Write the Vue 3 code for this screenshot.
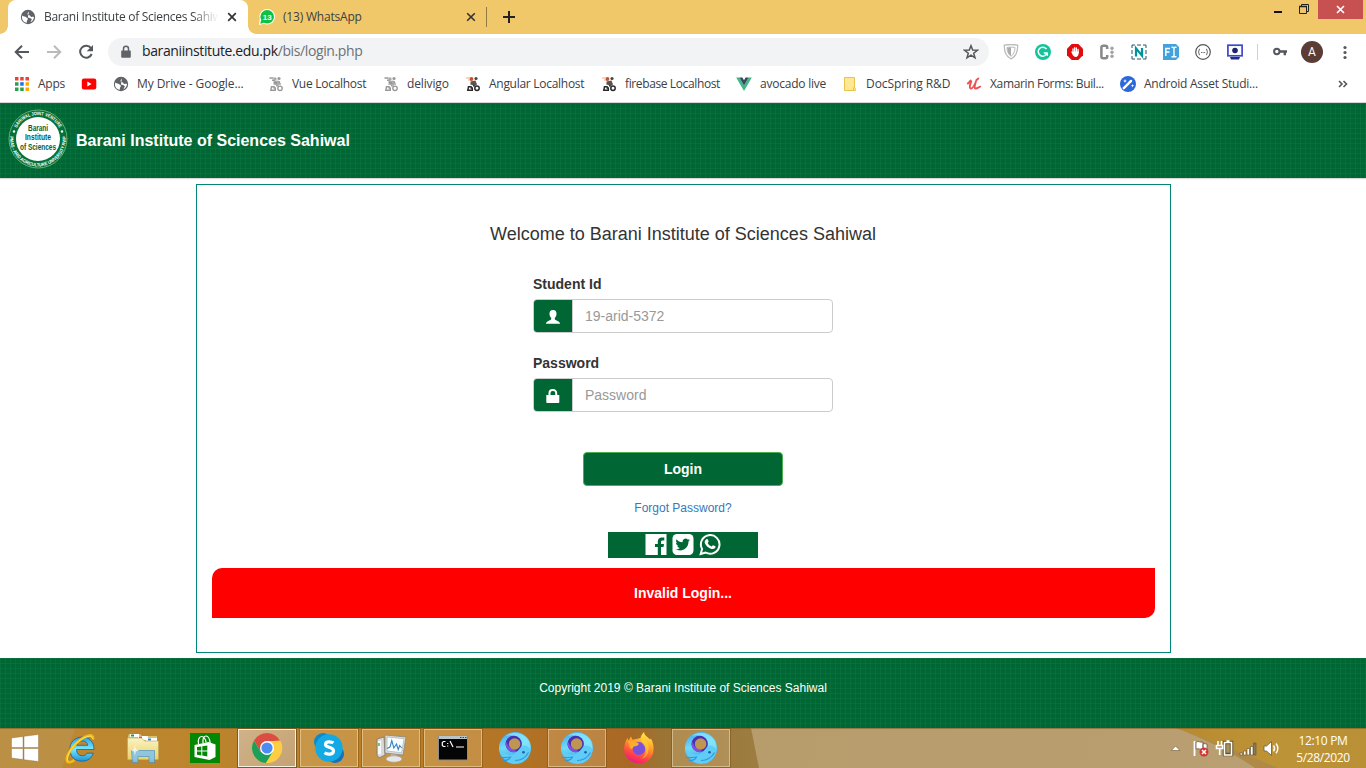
<script setup>
const bookmarks = [
  { icon: 'apps', label: 'Apps', w: 67, ls: -0.22 },
  { icon: 'youtube', label: '', w: 32, ls: 0 },
  { icon: 'globe', label: 'My Drive - Google...', w: 155, ls: -0.08 },
  { icon: 'rider', label: 'Vue Localhost', w: 115, ls: -0.28 },
  { icon: 'rider', label: 'delivigo', w: 82, ls: -0.15 },
  { icon: 'riderdark', label: 'Angular Localhost', w: 136, ls: -0.28 },
  { icon: 'riderdark', label: 'firebase Localhost', w: 135, ls: -0.38 },
  { icon: 'vue', label: 'avocado live', w: 106, ls: -0.22 },
  { icon: 'folder', label: 'DocSpring R&D', w: 124, ls: -0.08 },
  { icon: 'udemy', label: 'Xamarin Forms: Buil...', w: 154, ls: -0.36 },
  { icon: 'wand', label: 'Android Asset Studi...', w: 150, ls: -0.24 }
]
const extensions = ['shield', 'grammarly', 'hand', 'cdots', 'nbox', 'fi', 'braces', 'monitor']
const tasks = [
  { icon: 'ie' },
  { icon: 'explorer' },
  { icon: 'store' },
  { icon: 'chrome', state: 'active' },
  { icon: 'skype', state: 'open' },
  { icon: 'perf', state: 'open' },
  { icon: 'cmd', state: 'open' },
  { icon: 'whale' },
  { icon: 'whale', state: 'open' },
  { icon: 'firefox' },
  { icon: 'whale', state: 'open' }
]
</script>

<template>
  <div class="screen">
    <svg class="defs" width="0" height="0">
      <defs>
        <linearGradient id="gFox" x1="0.7" y1="0" x2="0.3" y2="1"><stop offset="0" stop-color="#fff04a" /><stop offset="0.4" stop-color="#ff9a26" /><stop offset="0.75" stop-color="#ff4048" /><stop offset="1" stop-color="#e2188a" /></linearGradient>
        <linearGradient id="gWhale" x1="0" y1="0" x2="0.3" y2="1"><stop offset="0" stop-color="#3fa2ee" /><stop offset="0.5" stop-color="#6fdcf8" /><stop offset="1" stop-color="#3b9ae8" /></linearGradient>
        <linearGradient id="gIe" x1="0" y1="0" x2="0" y2="1"><stop offset="0" stop-color="#2b9fdc" /><stop offset="0.5" stop-color="#7be6fd" /><stop offset="1" stop-color="#1c93d6" /></linearGradient>
        <linearGradient id="gFold" x1="0" y1="0" x2="0" y2="1"><stop offset="0" stop-color="#fbf3c0" /><stop offset="1" stop-color="#ecd06c" /></linearGradient>
        <path id="ringTopArc" d="M6 30 A24 24 0 0 1 54 30" />
        <path id="ringBottomArc" d="M3.300 21 A28 28 0 1 0 56.700 21" />
      </defs>
      <symbol id="i-globe" viewBox="0 0 16 16"><circle cx="8" cy="8" r="7.200" fill="#5f6368" /><path d="M2.300 6.400c1.600 1.300 3 .6 3.700 1.700.5 1 1.900.7 1.900 2 0 .9-1 1-1 2v1.700C4 13.500 2 11.500 1.900 8.200zM9 2.200C8.600 3.500 7.600 3.400 7.500 4.700c-.1 1.200 1.200 1 2 1.500.9.5 1 1.600 2 1.700 1 .1 1.500-.4 2.500.1-.2 2.500-1.600 4.400-3.600 5.300.8-1 .6-1.900 1.600-2.700-1.300-1.900-2.700-2-4.100-2.200" fill="#fff" /></symbol>
      <symbol id="i-apps" viewBox="0 0 16 16"><path d="M1 1h3.500v3.500H1zM6.200 1h3.500v3.500H6.200zM11.500 1H15v3.500h-3.500z" fill="#ea4335" /><path d="M1 6.200h3.500v3.500H1zM1 11.500h3.500V15H1zM6.200 11.500h3.500V15H6.200z" fill="#2e9e4f" /><path d="M6.200 6.200h3.500v3.500H6.200z" fill="#1a73e8" /><path d="M11.500 6.200H15v3.500h-3.500zM11.500 11.500H15V15h-3.500z" fill="#f9ab00" /></symbol>
      <symbol id="i-youtube" viewBox="0 0 16 16"><rect x=".8" y="2.500" width="14.500" height="11" rx="2.200" fill="#f00" /><path d="M6.300 5.500v5l4.300-2.500z" fill="#fff" /></symbol>
      <symbol id="i-rider" viewBox="0 0 16 16"><g fill="none" stroke="#999" stroke-width="1.400"><path d="M6.800 10.800H3.500l-.7 3.500h4.500V12H5.500M7.500 7.500l2 3" /><circle cx="12" cy="12.300" r="2.200" /><path d="M1.500 2h4M4 4.200h3" /></g><circle cx="7" cy="3" r="1.700" fill="#aaa" /><circle cx="11" cy="2.500" r="1.600" fill="#999" /><path d="M5.500 5l5-.5 1.500 4-2 1.500-2-1.500-2.500.5z" fill="#aaa" /><path d="M11 5l1.500 3.500M6 6.500l3 .5" stroke="#888" /></symbol>
      <symbol id="i-riderdark" viewBox="0 0 16 16"><g fill="none" stroke="#292929" stroke-width="1.500"><path d="M6.800 10.800H3.500l-.7 3.500h4.500V12H5.500M7.500 7.500l2 3" /><circle cx="12" cy="12.300" r="2.200" /></g><path d="M1 2h4M3 4h3" stroke="#e8aa90" stroke-width="1.200" /><circle cx="6.500" cy="3" r="1.900" fill="#c95126" /><circle cx="11" cy="2.500" r="1.600" fill="#444" /><path d="M5.500 5.500l5-1 1.500 4-2 1.500-2-1.500-2.500.5z" fill="#555" /></symbol>
      <symbol id="i-vue" viewBox="0 0 16 16"><path d="M.2 1.500h3.200L8 9.400l4.600-7.900h3.200L8 15z" fill="#41b883" /><path d="M3.400 1.500h3L8 4.300l1.600-2.800h3L8 9.400z" fill="#35495e" /></symbol>
      <symbol id="i-folder" viewBox="0 0 16 16"><path d="M2.500 1.500h10v10.200l.8.600v2.200h-10.800z" fill="#ffe793" stroke="#e8c54a" /><path d="M11.500 14.500v-3l1-1" fill="none" stroke="#e8c54a" /></symbol>
      <symbol id="i-udemy" viewBox="0 0 16 16"><path d="M1.800 7.500C3 7 3.800 5.600 4.500 4.500M5.300 5.300C4 8.500 3 12 4.600 12.500c2.200.6 4-3.500 5.400-7M10 5.300c-1.300 3.300-2 7-.4 7.200 1.500.2 2.500-1 4.600-1.800M10.300 4.300l2-1.800" fill="none" stroke="#ec5252" stroke-width="1.900" stroke-linecap="round" /></symbol>
      <symbol id="i-wand" viewBox="0 0 16 16"><circle cx="8" cy="8" r="8" fill="#2b68d9" /><path d="M3.800 12.200l4.500-4.500" stroke="#fff" stroke-width="2.500" stroke-linecap="round" /><path d="M9.300 6.700l1.700-1.700" stroke="#fff" stroke-width="2.500" stroke-linecap="round" /><path d="M5 3l.6 1.500L7 5l-1.400.6L5 7l-.6-1.400L3 5l1.400-.5zM12.500 8l.5 1.200 1.200.5-1.200.5-.5 1.200-.5-1.200-1.200-.5 1.200-.5z" fill="#fff" /></symbol>

      <symbol id="i-shield" viewBox="0 0 16 16"><path d="M1.300 1.200C5 .4 11 .4 14.700 1.200 14.900 8 12 13 8 15 4 13 1.100 8 1.300 1.200z" fill="#fff" stroke="#bbb" stroke-width="1.300" /><path d="M4 3.500c2.500-.5 5.500-.5 8 0 0 4.200-1.700 7.300-4 8.800-2.300-1.500-4-4.600-4-8.800z" fill="none" stroke="#bbb" /><path d="M8 3.200v9c-2.200-1.500-3.500-4.400-3.700-8.500z" fill="#aaa" /></symbol>
      <symbol id="i-grammarly" viewBox="0 0 16 16"><circle cx="8" cy="8" r="8" fill="#15c39a" /><path d="M11.500 5.200A4.500 4.500 0 1 0 12 9H8.800M12.300 9v2.700" fill="none" stroke="#fff" stroke-width="1.500" /></symbol>
      <symbol id="i-hand" viewBox="0 0 16 16"><path d="M4.700 0h6.600L16 4.700v6.600L11.300 16H4.700L0 11.300V4.700z" fill="#e30b0b" /><path d="M6 8.500V5M7.700 8V3.700M9.400 8V4M11.100 8.500V5.500" stroke="#fff" stroke-width="1.300" stroke-linecap="round" /><path d="M5.400 7.500h6.350c.2 3-.8 5.500-3.200 5.500-2 0-2.800-1.800-3.800-3.900l-.6-1.300c.5-.5 1-.3 1.300.3z" fill="#fff" /></symbol>
      <symbol id="i-cdots" viewBox="0 0 16 16"><path d="M8.200 5V3.500a1.800 1.800 0 0 0-1.800-1.800H4.200a1.800 1.800 0 0 0-1.800 1.800v9a1.800 1.800 0 0 0 1.800 1.800h2.200a1.800 1.800 0 0 0 1.800-1.800V11" fill="none" stroke="#888" stroke-width="2.500" /><circle cx="13" cy="4.300" r="1.700" fill="#a2a2a2" /><circle cx="13" cy="8.300" r="1.700" fill="#a2a2a2" /><circle cx="13" cy="12.300" r="1.700" fill="#a2a2a2" /></symbol>
      <symbol id="i-nbox" viewBox="0 0 16 16"><path d="M1 4V1h3M6 1h4M12 1h3v3M15 6v4M15 12v3h-3M10 15H6M4 15H1v-3M1 10V6" fill="none" stroke="#24566a" stroke-width="1" /><path d="M5 12.500V4.300l6 7.400V4" fill="none" stroke="#00939c" stroke-width="2.200" /></symbol>
      <symbol id="i-fi" viewBox="0 0 16 16"><path d="M0 0h13l3 3v10l-3 3H0z" fill="#42a2de" /><path d="M2.800 12V4.500H7M3 8h3.500M8.500 3.300h1.200q1.300 0 1.300 1.200v7q0 1.200-1.300 1.200H8.500M13.500 3.300h-1.200Q11 3.300 11 4.500M13.500 12.700h-1.200Q11 12.700 11 11.500" fill="none" stroke="#fff" stroke-width="1.400" /></symbol>
      <symbol id="i-braces" viewBox="0 0 16 16"><circle cx="8" cy="8" r="7.300" fill="#fff" stroke="#555" stroke-width="1.200" /><path d="M5 5c-1.500 0-.5 2.500-1.800 3C4.500 8.500 3.500 11 5 11M11 5c1.500 0 .5 2.500 1.800 3-1.300.5-.3 3-1.800 3M6 8.500h.9M7.600 8.500h.9M9.200 8.500h.9" fill="none" stroke="#555" stroke-width="1" /></symbol>
      <symbol id="i-monitor" viewBox="0 0 16 16"><rect x=".9" y="1.200" width="14.200" height="10.600" fill="#fff" stroke="#3b48cf" stroke-width="1.700" /><circle cx="8" cy="6.500" r="2.800" fill="#1c2470" /><path d="M3 13h10l-1 2.500H4z" fill="#222c80" /></symbol>

      <symbol id="i-ie" viewBox="0 0 34 34"><path d="M30 18.500H12.500c.1 4 2.400 6.200 5.700 6.200 2.300 0 3.900-.8 4.800-2.500h6.300c-1.600 5-5.700 8-11.200 8C10.500 30.200 6 25.500 6 18.300 6 11 11 6 18.100 6 25.500 6 30 11 30 18.500zm-17.300-4.200h11c-.3-2.800-2.300-4.400-5.300-4.400-3.100 0-5.200 1.700-5.700 4.400z" fill="url(#gIe)" stroke="#16639c" stroke-width=".8" /><path d="M29 8.500c1.200-7.500-9-3.600-16 3C4.500 19.500.5 29 4 31c1.700.9 4.300-.5 6.500-1.900" fill="none" stroke="#f3bb16" stroke-width="2.600" /><path d="M28.500 7.500C28 2.500 18 6.500 12 12.500 5.500 19 2 27 4 30" fill="none" stroke="#ffe767" stroke-width=".9" /></symbol>
      <symbol id="i-explorer" viewBox="0 0 34 34"><path d="M2 5l1-2h11l2 2h15v24H2z" fill="#d9c06d" /><path d="M4 3h9v3H4z" fill="#fff" /><path d="M5 3.500h3v2H5z" fill="#15a32a" /><path d="M12 5h10v4H12z" fill="#fff" /><path d="M13 5.500h3v2h-3z" fill="#df4a26" /><path d="M20 7h11v4H20z" fill="#fff" /><path d="M22 7.500h3v2h-3z" fill="#2b8cdc" /><path d="M1.500 7h14l3 3h14v18.500h-31z" fill="url(#gFold)" stroke="#bea250" stroke-width=".6" /><path d="M5.500 19.500h23v12H23v-6H12v6H6.500z" fill="#83c4e8" stroke="#3f8fc0" stroke-width=".7" opacity=".9" /><path d="M9 14l.7 4.300 3.300 1.200-3.300 1L9 25l-.9-4.500-3.100-1 3.100-1.200z" fill="#fff" opacity=".8" /></symbol>
      <symbol id="i-store" viewBox="0 0 34 34"><path d="M2 2h30v30H2z" fill="#028802" /><path d="M6.500 14l14-3 7 2.500V26l-6 3-15-3z" fill="#fff" /><path d="M10.500 13c-.8-4.200.5-7.500 3-7.500s4 2.500 4.600 6M15 12c-.4-4.500.8-7 3.200-7 2 0 3.300 2 4 7" fill="none" stroke="#fff" stroke-width="1.200" /><path d="M9 16l4.300-.6v4H9zM14.300 15.200l5-.8v5h-5zM9 20.400h4.300v4L9 23.700zM14.300 20.400h5v5l-5-.9z" fill="#028802" /></symbol>
      <symbol id="i-chrome" viewBox="0 0 34 34"><circle cx="17" cy="17" r="15" fill="#ffcd41" /><path d="M4 9.500A15 15 0 0 1 30 9.500L17 10.500l-6.500 10z" fill="#dc4d41" /><path d="M4 9.500A15 15 0 0 0 16 32L23.500 20.500l-13 0z" fill="#1b9f5a" /><path d="M17 10h13.400A15 15 0 0 1 16 32l7-11.500z" fill="#ffcd41" /><circle cx="17" cy="17" r="7" fill="#fff" /><circle cx="17" cy="17" r="5.600" fill="#4b8bf4" /></symbol>
      <symbol id="i-skype" viewBox="0 0 34 34"><circle cx="11" cy="11" r="9" fill="#0d89c8" /><circle cx="23" cy="23" r="9" fill="#1372ba" /><circle cx="17" cy="17" r="13.700" fill="#12a9e4" /><path d="M21.300 12c-1.600-1.500-7.500-2-7.800 1.300-.3 3.700 8 2.200 8 6.500 0 4.200-6.300 4-9 2" fill="none" stroke="#fff" stroke-width="3.200" /></symbol>
      <symbol id="i-perf" viewBox="0 0 34 34"><path d="M3 8l7-2 1 18-6 3-2-3z" fill="#d8d8d8" stroke="#777" stroke-width=".8" /><path d="M4 10l3-.6v14L4 23z" fill="#f7f7f7" /><path d="M4.200 12h1.500v3H4.200z" fill="#3ebc34" /><path d="M11 4l21 2-3 18-18-2z" fill="#ddd" stroke="#888" stroke-width=".8" /><path d="M13 6l17 1.700-2.400 14L13 20z" fill="#fafdff" stroke="#9aa" stroke-width=".6" /><path d="M13 17.500l3-1.500 1.800-6.500 2 7.500 2.700-4 1.700 5.500 1.500-4 2 2.500" fill="none" stroke="#3584c5" stroke-width="1.100" /><path d="M17 23l6 1 1 4h-8z" fill="#bbb" /><ellipse cx="20" cy="28" rx="8" ry="3.200" fill="#e6e6e6" stroke="#999" stroke-width=".6" /></symbol>
      <symbol id="i-cmd" viewBox="0 0 34 34"><path d="M2.500 5h29v24h-29z" fill="#050505" stroke="#8c8c8c" /><path d="M3 5h28v3H3z" fill="#b9c4c9" /><path d="M24 6h1.500v1H24zM26.500 6H28v1h-1.500zM29 6h1.500v1H29z" fill="#445" /><path d="M9.500 10.500h-2l-1.200 1v3l1.200 1h2M11.700 12v1M11.700 14.500v1M14 10l3 6" fill="none" stroke="#fff" stroke-width="1.200" /><path d="M20 16h8" stroke="#fff" /></symbol>
      <symbol id="i-whale" viewBox="0 0 34 34"><circle cx="17" cy="17" r="16" fill="url(#gWhale)" /><path d="M8 5C15-1 26 1.500 30.500 10c2 4 2.500 7 1.500 10-3-5-7-5-9-3 1.500-4 1-8-3-10.500C16 4 12 3.500 8 5z" fill="#86e6fd" opacity=".8" /><circle cx="15.700" cy="13" r="8.200" fill="#4630b4" /><path d="M8 10.500A8.200 8.200 0 0 0 19 20.500L11 16z" fill="#8050dc" /><circle cx="16.600" cy="13" r="5.800" fill="#bf9552" /><path d="M2 17c3 6.500 12 9 17 4 2.800-2.900 4-6.500 7-6.500s5 2 6.800 3.700C32 26.500 26 33 17 33 9 33 2.500 26.500 2 17z" fill="#5fcdf5" /><path d="M2 26c3.500 1.500 7 .5 10.500 0-1 2.600-4.500 4-8 3M17 29.500c6 0 11-3.500 13.500-8" fill="none" stroke="#2f98e2" stroke-width="1.200" /><circle cx="25.500" cy="21.300" r="1.300" fill="#1d5fa4" /></symbol>
      <symbol id="i-firefox" viewBox="0 0 34 34"><path d="M18.500 7C19 4 20.500 2.500 22 1c.5 4 3.500 4.500 6 7.500l1-1c5.500 10 2.500 24-11 25C7 32.500.5 24 2.500 14.500 3 11 4 9 5.500 7l1 2.500L9 5.500l1.500 3.300c3-.8 5-.8 8-1.800z" fill="url(#gFox)" /><circle cx="17" cy="17.500" r="6.500" fill="#7950dc" /><path d="M6 10c4-1.500 7 .2 9 1.700l2 .8c-.7 2.600-3 2.500-5 3-1.500.6-.7 3.700-4 1.800" fill="#ffab2c" /><path d="M19 5c5 2 10 9 6.500 18-1.500 3-4 4.500-7 4.800 6-2.300 7-9.300 2-15.300-1.500-2-2-5-1.500-7.500z" fill="#ffd53d" opacity=".55" /></symbol>
    </svg>

    <header class="chrome">
      <div class="tabbar">
        <div class="tab active">
          <svg class="fav" width="16" height="16"><use href="#i-globe" /></svg>
          <span class="tab-title fade">Barani Institute of Sciences Sahiwal</span>
          <svg class="x" width="10" height="10" viewBox="0 0 10 10"><path d="M1.200 1.200l7.600 7.600M8.800 1.200L1.200 8.800" stroke="#333" stroke-width="1.700" /></svg>
        </div>
        <div class="tab second">
          <svg class="fav" width="16" height="16" viewBox="0 0 16 16"><circle cx="8.200" cy="7.800" r="7.800" fill="#fff" /><path d="M0 16l.8-6 5 4.500z" fill="#fff" /><circle cx="8.200" cy="7.800" r="6.800" fill="#0dc143" /><path d="M1.300 14.700l.9-4 3 3z" fill="#0dc143" /><text x="8.200" y="10.500" text-anchor="middle" class="badge13">13</text></svg>
          <span class="tab-title wa">(13) WhatsApp</span>
          <svg class="x" width="10" height="10" viewBox="0 0 10 10"><path d="M1.200 1.200l7.600 7.600M8.800 1.200L1.200 8.800" stroke="#333" stroke-width="1.600" /></svg>
        </div>
        <svg class="plus" width="14" height="14" viewBox="0 0 14 14"><path d="M7 1v12M1 7h12" stroke="#222" stroke-width="2" /></svg>
        <div class="winctl">
          <svg width="50" height="20" viewBox="0 0 50 20"><path d="M6 12h8" stroke="#111" stroke-width="2" /><path d="M31.500 6.500h7v7h-7zM33.500 6V4.500h7v7H39" fill="none" stroke="#222" /><path d="M31 6.500h8" stroke="#222" stroke-width="1.500" /></svg>
          <div class="close"><svg width="9" height="9" viewBox="0 0 9 9"><path d="M1 1l7 7M8 1L1 8" stroke="#fff" stroke-width="1.600" /></svg></div>
        </div>
      </div>

      <div class="toolbar">
        <svg class="nav" width="96" height="20" viewBox="0 0 96 20">
          <path d="M23 10H10.500M16 3.700L9.700 10l6.300 6.300" fill="none" stroke="#54585c" stroke-width="2" />
          <path d="M41 10h12.500M48 3.700l6.300 6.300-6.300 6.300" fill="none" stroke="#b9bbbd" stroke-width="2" />
          <path d="M85 6.200A6 6 0 1 0 85.700 12" fill="none" stroke="#54585c" stroke-width="2" /><path d="M87 3v6.300h-6.300z" fill="#54585c" />
        </svg>
        <div class="omni">
          <svg width="10" height="14" viewBox="0 0 10 14"><path d="M1 5.500h8a.8.800 0 0 1 .8.800v5.400a1 1 0 0 1-1 1H1.200a1 1 0 0 1-1-1V6.300A.8.800 0 0 1 1 5.500z" fill="#5f6368" /><path d="M2.500 6V3.700a2.500 2.500 0 0 1 5 0V6" fill="none" stroke="#5f6368" stroke-width="1.500" /></svg>
          <span class="url">baraniinstitute.edu.pk<i>/bis/login.php</i></span>
          <svg class="star" width="16" height="16" viewBox="0 0 16 16"><path d="M8 1.700l1.700 4.400 4.700.2-3.700 2.900 1.300 4.600L8 11.200l-4 2.600 1.300-4.600L1.600 6.300l4.700-.2z" fill="none" stroke="#54585c" stroke-width="1.500" /></svg>
        </div>
        <div class="exts">
          <svg v-for="e in extensions" :key="e" width="16" height="16"><use :href="'#i-' + e" /></svg>
        </div>
        <span class="vsep"></span>
        <svg class="key" width="14" height="10" viewBox="0 0 14 10"><circle cx="3.800" cy="4.500" r="2.700" fill="none" stroke="#54585c" stroke-width="2" /><path d="M6.500 4.500H14M11.800 4.500v3.700" stroke="#54585c" stroke-width="2.400" /></svg>
        <span class="avatar">A</span>
        <svg class="dots" width="4" height="16" viewBox="0 0 4 16"><circle cx="2" cy="3.500" r="1.600" fill="#54585c" /><circle cx="2" cy="8.500" r="1.600" fill="#54585c" /><circle cx="2" cy="13.500" r="1.600" fill="#54585c" /></svg>
      </div>

      <nav class="bookmarks">
        <div v-for="(b, i) in bookmarks" :key="i" class="bm" :style="{ width: b.w + 'px', letterSpacing: b.ls + 'px' }">
          <svg width="16" height="16"><use :href="'#i-' + b.icon" /></svg>
          <span>{{ b.label }}</span>
        </div>
        <svg class="more" width="10" height="8" viewBox="0 0 10 8"><path d="M1 1l3 3-3 3M5.500 1l3 3-3 3" fill="none" stroke="#54585c" stroke-width="1.600" /></svg>
      </nav>
    </header>

    <section class="banner pattern">
      <svg class="logo" width="60" height="60" viewBox="0 0 60 60">
        <circle cx="30" cy="30" r="29" fill="#04733a" stroke="#65ac74" stroke-width="1" />
        <circle cx="30" cy="30" r="22" fill="#fff" />
        <text class="ring"><textPath href="#ringTopArc" startOffset="50%" text-anchor="middle" textLength="52" lengthAdjust="spacingAndGlyphs">SAHIWAL JOINT VENTURE</textPath></text>
        <text class="ring"><textPath href="#ringBottomArc" startOffset="50%" text-anchor="middle" textLength="92" lengthAdjust="spacingAndGlyphs">PMAS - ARID AGRICULTURE UNIVERSITY RWP</textPath></text>
        <circle cx="6" cy="22.500" r="1.200" fill="#fff" /><circle cx="54" cy="22.500" r="1.200" fill="#fff" />
        <text class="lg" x="30" y="21.800" textLength="20" lengthAdjust="spacingAndGlyphs" text-anchor="middle">Barani</text>
        <text class="lg" x="30" y="31.300" textLength="26" lengthAdjust="spacingAndGlyphs" text-anchor="middle">Institute</text>
        <text class="lg" x="30" y="40.800" textLength="36" lengthAdjust="spacingAndGlyphs" text-anchor="middle">of Sciences</text>
      </svg>
      <span class="brand">Barani Institute of Sciences Sahiwal</span>
    </section>

    <main class="panel">
      <h4>Welcome to Barani Institute of Sciences Sahiwal</h4>
      <div class="form">
        <label>Student Id</label>
        <div class="group">
          <span class="addon"><svg width="14" height="14" viewBox="0 0 14 14"><path d="M7 0c2.500 0 3.700 1.600 3.500 4.200-.1 1.600-.7 2.800-1.700 3.600v1.400c0 1 4.500 1.600 5.200 4.100v.4H0v-.4c.7-2.500 5.200-3.100 5.200-4.100V7.800c-1-.8-1.600-2-1.700-3.600C3.300 1.600 4.500 0 7 0z" fill="#fff" /></svg></span>
          <span class="field">19-arid-5372</span>
        </div>
        <label>Password</label>
        <div class="group">
          <span class="addon"><svg width="14" height="14" viewBox="0 0 14 14"><path d="M.3 6h13v7.200a.8.800 0 0 1-.8.800H1.100a.8.800 0 0 1-.8-.8z" fill="#fff" /><path d="M3.500 6.500V4a3 3 0 0 1 3-3h.7a3 3 0 0 1 3 3v2.500" fill="none" stroke="#fff" stroke-width="2" /></svg></span>
          <span class="field">Password</span>
        </div>
      </div>
      <div class="login">Login</div>
      <a class="forgot">Forgot Password?</a>
      <div class="social">
        <svg width="22" height="22" viewBox="0 0 22 22"><path d="M.5 0h21v21H16V13h2.500l.5-3h-3V8c0-1 .4-1.600 1.700-1.600h1.600V3.600c-.6-.1-1.300-.2-2.300-.2-2.700 0-4.200 1.500-4.200 4.200V10H10v3h2.800v8H.5z" fill="#fff" /></svg>
        <svg width="22" height="22" viewBox="0 0 22 22"><rect x=".5" width="21" height="21" rx="4.500" fill="#fff" /><path d="M18 6c-.5.300-1.100.4-1.700.5.600-.4 1-1 1.300-1.600-.6.300-1.200.6-1.900.7a3 3 0 0 0-5.100 2.700C8.100 8.200 5.900 7 4.500 5.200c-.9 1.500-.4 3.100.9 4-.5 0-1-.2-1.400-.4 0 1.500 1 2.700 2.400 3-.4.100-.9.100-1.300 0 .4 1.200 1.500 2 2.800 2.100-1.300 1-2.800 1.400-4.400 1.200 5.700 3.500 13-.1 13-7.500.6-.4 1.100-1 1.500-1.600z" fill="#006633" /></svg>
        <svg width="22" height="22" viewBox="0 0 22 22"><path d="M1.700 20l1.400-5A9.300 9.300 0 1 1 6.600 18.500z" fill="none" stroke="#fff" stroke-width="2" /><path d="M7.300 5.200c.6-.5 1.300-.3 1.500.2l.8 1.900c.2.600-.6 1.100-.9 1.600 1 1.800 2.100 2.700 3.900 3.500.5-.4 1-1.400 1.500-1.200l2.200 1c.5.300.2 1.500-.4 2.100-1.200 1.100-3 .9-4.600.2-2.500-1-4.300-3-5.300-5-.7-1.500-.3-3.300 1.300-4.300z" fill="#fff" /></svg>
      </div>
      <div class="alert">Invalid Login...</div>
    </main>

    <footer class="foot pattern">Copyright 2019 © Barani Institute of Sciences Sahiwal</footer>

    <div class="taskbar">
      <svg class="wall" width="1366" height="40" preserveAspectRatio="none" viewBox="0 0 1366 40">
        <defs>
          <linearGradient id="w1"><stop offset="0" stop-color="#bd8a32" /><stop offset="0.55" stop-color="#b97d27" /><stop offset="0.83" stop-color="#a96824" /><stop offset="0.87" stop-color="#9b7434" /><stop offset="1" stop-color="#9d7d41" /></linearGradient>
          <linearGradient id="w2"><stop offset="0" stop-color="#b79d6c" /><stop offset="1" stop-color="#b99f71" /></linearGradient>
          <linearGradient id="w3"><stop offset="0" stop-color="#b88a2f" /><stop offset="0.500" stop-color="#bd9336" /><stop offset="1" stop-color="#ba9036" /></linearGradient>
        </defs>
        <rect width="760" height="40" fill="url(#w1)" />
        <path d="M0 0H75L62 40H0z" fill="#bb9045" />
        <path d="M751 0H1190L1290 40H759z" fill="url(#w2)" />
        <path d="M1176 0H1366V40H1278Q1235 21 1176 0z" fill="url(#w3)" />
        <path d="M1176 0Q1235 21 1278 40H1255Q1225 19 1176 0z" fill="#a97b2b" opacity=".6" />
        <path d="M0 .5H1366" stroke="#6b4d18" stroke-opacity=".45" />
      </svg>
      <div class="start"><svg width="28" height="28" viewBox="0 0 28 28"><path d="M.5 4L12 2.500v11H.5zM13 2.300L27.500.500v13H13zM.5 14.500H12v11L.5 24zM13 14.500h14.500v13L13 25.700z" fill="#fff" stroke="#8b6a34" stroke-width=".4" /></svg></div>
      <div v-for="(t, i) in tasks" :key="i" class="task" :class="t.state">
        <svg width="34" height="34"><use :href="'#i-' + t.icon" /></svg>
      </div>
      <div class="tray">
        <svg class="trayicons" width="112" height="20" viewBox="-3 0 112 20">
          <path d="M.3 12.500L4.500 8l4.500 4.500z" fill="#fff" stroke="#7a6640" stroke-width=".7" />
          <path d="M23.500 3v15" stroke="#fff" stroke-width="1.800" /><path d="M25 4c3-1.500 4 1 7 0v7c-3 1-4-1-7 0zM32 5.500l4 .5v6h-4z" fill="#fff" stroke="#6d5a35" stroke-width=".8" /><circle cx="33" cy="14" r="4.500" fill="#d33636" /><path d="M31 12l4 4M35 12l-4 4" stroke="#fff" stroke-width="1.500" />
          <path d="M53.500 4.500h7v12h-7z" fill="#a9915d" stroke="#62502a" stroke-width="3.500" /><path d="M53.500 4.500h7v12.500h-7zM55.500 3h3M47 3v4M50.500 3v4M45.500 7.500h6v3h-6zM48.700 11v6" fill="none" stroke="#fff" stroke-width="1.600" />
          <path d="M69 17v-2h2.500v2zM72.500 17v-4H75v4zM76 17v-6.500h2.500V17zM79.500 17V8.500H82V17z" fill="#fff" stroke="#6d5a35" stroke-width=".7" /><path d="M82.500 17V5H85v12z" fill="#857a60" stroke="#6d5a35" stroke-width=".7" />
          <path d="M93 8h2.500l5-4.500v14L95.500 13H93z" fill="#fff" stroke="#6d5a35" stroke-width=".8" /><path d="M102.500 7.500c1.300 1.700 1.300 4 0 5.700M105 5.500c2.300 3 2.300 6.700 0 9.700" fill="none" stroke="#fff" stroke-width="1.400" />
        </svg>
        <div class="clock"><span>12:10 PM</span><span>5/28/2020</span></div>
      </div>
    </div>
  </div>
</template>

<style>
html, body { margin: 0; overflow: hidden; background: #fff; }
</style>

<style scoped>
* { box-sizing: border-box; }
.screen { position: relative; width: 1366px; height: 768px; display: flex; flex-direction: column; overflow: hidden; background: #fff; font-family: "Liberation Sans", Arial, sans-serif; }
.defs { position: absolute; }
svg { display: block; flex: none; }
.chrome { height: 103px; font-family: "Open Sans", "Noto Sans", sans-serif; font-size: 12px; color: #3c4043; border-bottom: 1px solid #d5d5d5; }
.tabbar { height: 34px; background: #f0c869; display: flex; align-items: center; padding-left: 8px; }
.tab { position: relative; height: 34px; display: flex; align-items: center; }
.tab.active { width: 240px; background: #fff; border-radius: 8px 8px 0 0; padding-left: 12px; }
.tab.active::before, .tab.active::after { content: ""; position: absolute; bottom: 0; width: 8px; height: 8px; }
.tab.active::before { left: -8px; background: radial-gradient(circle at 0 0, transparent 7.5px, #fff 8px); }
.tab.active::after { right: -8px; background: radial-gradient(circle at 100% 0, transparent 7.5px, #fff 8px); }
.tab-title { margin-left: 8px; white-space: nowrap; overflow: hidden; line-height: 20px; letter-spacing: -0.28px; color: #3c4043; }
.fade { width: 176px; mask-image: linear-gradient(90deg, #000 84%, transparent 99%); }
.fade + .x { margin-left: 7px; }
.tab.second { width: 239px; padding-left: 11px; }
.tab.second::after { content: ""; position: absolute; right: 0; top: 7px; width: 1px; height: 20px; background: #927a42; }
.wa { width: 175px; letter-spacing: -0.2px; }
.wa + .x { margin-left: 8px; }
.badge13 { font: bold 8px "Liberation Sans", sans-serif; fill: #fff; }
.plus { margin-left: 15px; }
.winctl { margin-left: auto; align-self: flex-start; display: flex; padding-right: 3px; }
.close { width: 45px; height: 19px; background: #c75050; display: flex; align-items: center; justify-content: center; }
.toolbar { height: 36px; display: flex; align-items: center; padding-left: 6px; }
.nav { margin-right: 6px; }
.omni { width: 881px; height: 28px; border-radius: 14px; background: #f1f3f4; display: flex; align-items: center; padding-left: 13px; }
.url { margin-left: 11px; padding-bottom: 2px; font-size: 14px; line-height: 20px; color: #202124; letter-spacing: -0.38px; white-space: nowrap; }
.url i { font-style: normal; color: #6c7074; }
.star { margin-left: auto; margin-right: 10px; }
.exts { display: flex; gap: 16px; margin-left: 14px; }
.vsep { width: 1px; height: 16px; background: #cfd1d4; margin-left: 14px; }
.key { margin-left: 15px; }
.avatar { margin-left: 14px; width: 22px; height: 22px; border-radius: 50%; background: #5b3d35; color: #fff; text-align: center; font: 12px/22px Roboto, sans-serif; }
.dots { margin-left: 20px; }
.bookmarks { height: 32px; display: flex; align-items: center; padding: 0 0 4px 14px; }
.bm { flex: none; display: flex; align-items: center; gap: 8px; white-space: nowrap; }
.bm span { line-height: 16px; padding-bottom: 1px; }
.more { margin-left: 68px; }
.pattern { background-color: #006633; background-image: linear-gradient(rgba(20, 130, 75, .32) 1px, transparent 1px), linear-gradient(90deg, rgba(20, 130, 75, .32) 1px, transparent 1px); background-size: 5px 5px; }
.banner { height: 75px; display: flex; align-items: center; padding: 0 0 3px 8px; box-shadow: 0 1px 1px rgba(0, 0, 0, .15); }
.ring { font: bold 4.8px "Liberation Sans", sans-serif; fill: #fff; }
.lg { font: bold 8.5px "Liberation Sans", sans-serif; fill: #075f32; }
.brand { margin-left: 8px; margin-top: 3px; color: #fff; font-size: 16px; font-weight: bold; }
.panel { width: 975px; height: 469px; margin: 6px 0 5px 196px; border: 1px solid #008577; padding: 39px 16px 0 15px; display: flex; flex-direction: column; align-items: center; color: #333; }
h4 { margin: 0; font-size: 18px; font-weight: 400; line-height: 20px; }
.form { width: 300px; margin-top: 30px; }
label { display: block; font-size: 14px; font-weight: bold; line-height: 20px; margin-bottom: 5px; }
.group { display: flex; height: 34px; border: 1px solid #ccc; border-radius: 4px; margin-bottom: 20px; overflow: hidden; }
.addon { width: 39px; background: #006633; border-right: 1px solid #ccc; display: flex; align-items: center; justify-content: center; padding-top: 2px; }
.field { padding-left: 12px; font-size: 14px; line-height: 32px; color: #999; }
.login { width: 200px; height: 34px; margin-top: 20px; border: 1px solid #4cae4c; border-radius: 4px; background: #006633; color: #fff; font-size: 14px; font-weight: bold; line-height: 32px; text-align: center; }
.forgot { margin-top: 14px; font-size: 12px; line-height: 17px; color: #337ab7; }
.social { margin-top: 15px; width: 150px; height: 26px; background: #006633; display: flex; justify-content: center; gap: 5px; padding-top: 2px; }
.alert { align-self: flex-start; margin-top: 10px; width: 943px; height: 50px; background: #f00; color: #fff; border-radius: 10px 0 10px 0; font-size: 14px; font-weight: bold; line-height: 50px; text-align: center; padding-right: 1px; }
.foot { height: 70px; padding-top: 20px; line-height: 20px; font-size: 12px; color: #fff; text-align: center; }
.taskbar { position: relative; height: 40px; display: flex; }
.wall { position: absolute; left: 0; top: 0; }
.start { position: relative; width: 50px; height: 40px; padding: 6px 0 0 11px; }
.task { position: relative; width: 58px; height: 38px; margin: 1px 2px; display: flex; align-items: center; justify-content: center; border: 1px solid transparent; }
.open { background: rgba(255, 235, 190, .2); border-color: rgba(255, 240, 205, .45); box-shadow: 0 0 0 1px rgba(90, 55, 10, .3); }
.active.task { background: linear-gradient(135deg, #cfb28a, #c5a273); border-color: #f8f0e0; box-shadow: 0 0 0 1px #7e5a22; }
.tray { position: relative; margin-left: auto; display: flex; align-items: center; }
.trayicons { overflow: visible; }
.clock { width: 86px; display: flex; flex-direction: column; align-items: center; font: 12px/17px "Open Sans", sans-serif; color: #fff; letter-spacing: -0.35px; padding-top: 1px; }
</style>
